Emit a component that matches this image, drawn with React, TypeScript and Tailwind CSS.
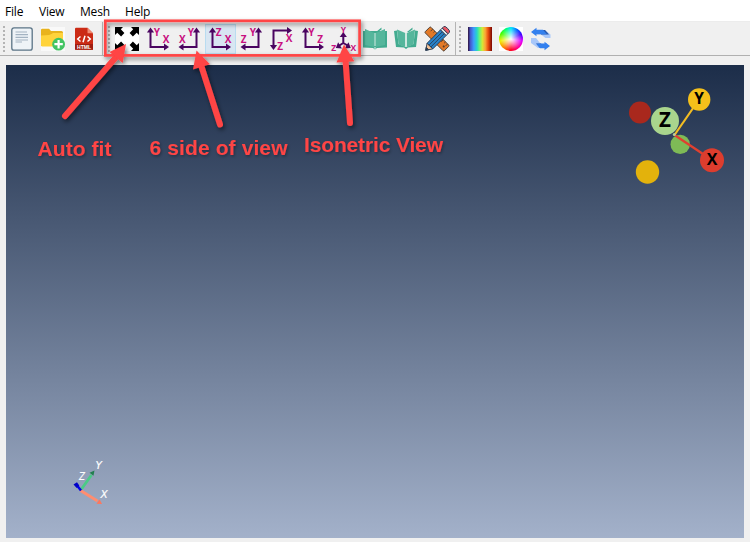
import React from "react";

const PURPLE = "#4a0560";
const PINK = "#c8107f";
const RED = "#ff4444";

function Btn({ children, active = false }: { children: React.ReactNode; active?: boolean }) {
  return (
    <button
      className={
        "flex h-[30px] w-[31px] shrink-0 items-center justify-center border " +
        (active ? "border-[#b9dcf0] bg-[#d8e6f2]" : "border-transparent")
      }
    >
      <svg width="24" height="24" viewBox="0 0 24 24" className="shrink-0 overflow-visible">
        {children}
      </svg>
    </button>
  );
}

function Grip() {
  return (
    <div className="mr-[1.5px] ml-[2px] flex h-[30px] w-[3px] shrink-0 flex-col items-center justify-center gap-[2px]">
      {[0, 1, 2, 3, 4, 5, 6].map((i) => (
        <div key={i} className="h-[2px] w-[2px] bg-[#b4b4b4]" />
      ))}
    </div>
  );
}

function Divider() {
  return <div className="-mt-[2px] h-[33px] w-px shrink-0 bg-[#b4b4b4]" />;
}

function Head({ x, y, dir }: { x: number; y: number; dir: number }) {
  return <path d="M0 0 L-5 -3.6 L-5 3.6 Z" fill={PURPLE} transform={`translate(${x} ${y}) rotate(${dir})`} />;
}

type Letter = [string, number, number];

function Letters({ items, size = 10 }: { items: Letter[]; size?: number }) {
  return (
    <g fill={PINK} fontFamily="'Open Sans', sans-serif" fontWeight="700" fontSize={size}>
      {items.map(([t, x, y]) => (
        <text key={t} x={x} y={y}>
          {t}
        </text>
      ))}
    </g>
  );
}

function Axes({ kind, items }: { kind: "right" | "left" | "down"; items: Letter[] }) {
  const s = { fill: "none", stroke: PURPLE, strokeWidth: 2 };
  return (
    <>
      {kind === "right" && (
        <>
          <path d="M4.5 4V20H19" {...s} />
          <Head x={4.5} y={0.5} dir={-90} />
          <Head x={23} y={20} dir={0} />
        </>
      )}
      {kind === "left" && (
        <>
          <path d="M19.5 4V20H5" {...s} />
          <Head x={19.5} y={0.5} dir={-90} />
          <Head x={1.5} y={20} dir={180} />
        </>
      )}
      {kind === "down" && (
        <>
          <path d="M3.5 19V3.5H18" {...s} />
          <Head x={3.5} y={23} dir={90} />
          <Head x={22} y={3.5} dir={0} />
        </>
      )}
      <Letters items={items} />
    </>
  );
}

function Book({ open = false }: { open?: boolean }) {
  return open ? (
    <>
      <path d="M0 4L3 3.5 4.5 17 12 20 19.5 17 21 3.5 24 4 22 20 14 20.5 12 22 10 20.5 2 20Z" fill="#42ab90" />
      <path d="M3 2.5L11.3 6V20L4.5 17.5Z" fill="#55b69c" />
      <path d="M21 2.5L12.7 6V20L19.5 17.5Z" fill="#55b69c" />
      <path d="M13 5L18.5 .5V2.5L15 5Z" fill="#42ab90" />
      <path d="M12 6V20" stroke="#dff1eb" strokeWidth="1" />
    </>
  ) : (
    <>
      <path d="M0 4H24V20.5L14 21 12 22.5 10 21 0 20.5Z" fill="#42ab90" />
      <path d="M2 2L11.3 6V20L2 18Z" fill="#55b69c" />
      <path d="M22 2L12.7 6V20L22 18Z" fill="#55b69c" />
      <path d="M13 5L18.5 .5V2.5L15 5Z" fill="#42ab90" />
      <path d="M12 6V19M12 20V22" stroke="#dff1eb" strokeWidth="1" />
    </>
  );
}

function Tools() {
  return (
    <>
      <g transform="rotate(45 12 12)">
        <rect x="-1.5" y="8" width="27" height="8" rx="1" fill="#e27927" stroke="#4b4038" strokeWidth=".9" />
        <path d="M2 8v3M5 8v2M8 8v3M17 8v3M20 8v2M23 8v3" stroke="#58402d" strokeWidth=".9" />
        <circle cx="22" cy="12.5" r="1" fill="#5a3b26" />
      </g>
      <g transform="rotate(-45 12 12)" stroke="#293d55" strokeWidth=".9">
        <path d="M-4 12L2 8V16Z" fill="#f2c196" />
        <path d="M-4 12L-1.5 10.3V13.7Z" fill="#263849" />
        <path d="M2 8H21V16H2Z" fill="#2983ca" />
        <path d="M2 10.7H21M2 13.3H21" />
        <path d="M21 8H23.5V16H21Z" fill="#dde5e8" />
        <path d="M23.5 8H25.5Q27 8 27 12T25.5 16H23.5Z" fill="#ed5864" />
      </g>
    </>
  );
}

function Toolbar() {
  return (
    <div className="flex h-[34px] items-start border-b border-[#b0b0b0] bg-[#f0f0f0] pt-[2px]">
      <Grip />
      <div className="flex w-[95px] shrink-0">
        <Btn>
          <rect x="1.8" y=".8" width="20.4" height="22.4" rx="2.2" fill="#eef3f7" stroke="#5b7486" strokeWidth="1.3" />
          <path d="M5.5 5H17M5.5 7.7H18M5.5 10.3H18M5.5 13H18M5.5 15H12" stroke="#a3b3c2" strokeWidth="1.2" />
        </Btn>
        <Btn>
          <rect width="24" height="24" fill="#f9f9f9" />
          <path d="M0 3Q0 1.8 1.2 1.8H8L10 4H20.5Q22 4 22 5.5V19H0Z" fill="#e9b31d" />
          <path d="M0 8.5Q10 8.5 12 6H22V19.5H1.5Q0 19.5 0 18Z" fill="#ffd33b" />
          <circle cx="17.6" cy="17.2" r="6.4" fill="#43c463" />
          <path d="M17.6 13V21.4M13.4 17.2H21.8" stroke="#fff" strokeWidth="2.2" />
        </Btn>
        <Btn>
          <path d="M4 .8H15.5L21 6.3V22.7H4Q3 22.7 3 21.7V1.8Q3 .8 4 .8Z" fill="#cb2b15" />
          <path d="M15.5 .8V6.3H21Z" fill="#f08a72" />
          <path d="M3 17H21V22.7H3Z" fill="#a11d10" />
          <path d="M8.5 9.5L5.7 12 8.5 14.5M15.5 9.5L18.3 12 15.5 14.5M13 8.8L11 15.2" fill="none" stroke="#fff" strokeWidth="1.5" />
          <text x="12" y="22" textAnchor="middle" textLength="14" lengthAdjust="spacingAndGlyphs" fill="#fff" fontFamily="'Liberation Sans', sans-serif" fontWeight="700" fontSize="5.3">
            HTML
          </text>
        </Btn>
      </div>
      <Divider />
      <div className="w-[2.5px] shrink-0" />
      <Grip />
      <div className="flex w-[342px] shrink-0">
        <Btn>
          <rect width="24" height="24" fill="#fff" />
          {[0, 90, 180, 270].map((r) => (
            <g key={r} transform={`rotate(${r} 12 12)`}>
              <path d="M0 0H8L5.8 2.3 9.4 6.1 6.1 9.4 2.3 5.8 0 8Z" fill="#000" />
            </g>
          ))}
        </Btn>
        <Btn><Axes kind="right" items={[["Y", 7.7, 8.5], ["X", 16.8, 16]]} /></Btn>
        <Btn><Axes kind="left" items={[["Y", 10.8, 8.5], ["X", 2, 16]]} /></Btn>
        <Btn active><Axes kind="right" items={[["Z", 7.7, 8.5], ["X", 16.8, 16]]} /></Btn>
        <Btn><Axes kind="left" items={[["Y", 10.8, 8.5], ["Z", 1.8, 16]]} /></Btn>
        <Btn><Axes kind="down" items={[["X", 15.8, 15], ["Z", 7.2, 22.5]]} /></Btn>
        <Btn><Axes kind="right" items={[["Y", 7.2, 8.5], ["Z", 16.3, 16]]} /></Btn>
        <Btn>
          <path d="M11.3 8V16L6.5 19M11.3 16L16.5 19" fill="none" stroke={PURPLE} strokeWidth="2" />
          <Head x={11.3} y={5} dir={-90} />
          <Head x={3.8} y={21} dir={148} />
          <Head x={18.8} y={21} dir={32} />
          <Letters size={8.5} items={[["Y", 8.8, 5.8], ["Z", -0.8, 24], ["X", 18.4, 24]]} />
        </Btn>
        <Btn><Book /></Btn>
        <Btn><Book open /></Btn>
        <Btn><Tools /></Btn>
      </div>
      <div className="w-px shrink-0" />
      <Divider />
      <div className="w-px shrink-0" />
      <Grip />
      <div className="ml-[1.5px] flex shrink-0">
        <Btn>
          <defs>
            <linearGradient id="spectrum">
              <stop offset="0" stopColor="#30123b" />
              <stop offset=".1" stopColor="#4458cb" />
              <stop offset=".24" stopColor="#3e9bfe" />
              <stop offset=".37" stopColor="#25d6c9" />
              <stop offset=".48" stopColor="#6bf576" />
              <stop offset=".6" stopColor="#d5e835" />
              <stop offset=".72" stopColor="#fca636" />
              <stop offset=".84" stopColor="#ea4f0d" />
              <stop offset="1" stopColor="#7a0403" />
            </linearGradient>
          </defs>
          <rect width="24" height="24" fill="url(#spectrum)" />
        </Btn>
        <div className="flex h-[30px] w-[31px] items-center justify-center">
          <div className="h-6 w-6 bg-white">
            <div className="h-6 w-6 rounded-full bg-[radial-gradient(circle,white_0%,transparent_65%),conic-gradient(#00e5ff_0deg,#0060ff_35deg,#4000ff_65deg,#e000ff_100deg,#ff0090_140deg,#ff0020_180deg,#ff8000_220deg,#f0f000_260deg,#40ff00_300deg,#00ff80_335deg,#00e5ff_360deg)]" />
          </div>
        </div>
        <Btn>
          <g transform="translate(1 0)">
            <path d="M6 3H14L19.5 7.5V11H14.5L10 7.5H6Z" fill="#a7c7fa" />
            <path d="M10 3H14L18 7.5H10Z" fill="#2858ab" />
            <path d="M0 5L5.5 .7V2.8H12L16 7.3H5.5V9.3Z" fill="#3380ee" />
            <path d="M16 21H7L0 16V11H5L9 16H16Z" fill="#a7c7fa" />
            <path d="M5 16.5H10L12 21H9Z" fill="#2858ab" />
            <path d="M19 19L13.5 14.7V16.8H5.5L9 21.2H13.5V23.3Z" fill="#3380ee" />
          </g>
        </Btn>
      </div>
    </div>
  );
}

function Sphere({ x, y, r, fill, label = "", size = 15 }: { x: number; y: number; r: number; fill: string; label?: string; size?: number }) {
  return (
    <>
      <circle cx={x} cy={y} r={r} fill={fill} />
      {label && (
        <text x={x} y={y + size * 0.27} textAnchor="middle" fontFamily="'Open Sans', sans-serif" fontWeight="700" fontSize={size} fill="#000">
          {label}
        </text>
      )}
    </>
  );
}

function Gizmo() {
  return (
    <svg width="110" height="110" viewBox="620 80 110 110" className="mt-[15px] mr-[14px]">
      <Sphere x={640} y={112.5} r={11} fill="#a9281d" />
      <Sphere x={647.5} y={172} r={11.7} fill="#e3b20c" />
      <Sphere x={680.2} y={144.4} r={9.7} fill="#7eba56" />
      <path d="M674.5 135L699 99.5" stroke="#f3bd22" strokeWidth="2.2" />
      <path d="M674.5 135L712 160" stroke="#e0402f" strokeWidth="2.2" />
      <Sphere x={665} y={121} r={14} fill="#a9d58d" label="Z" size={20.5} />
      <Sphere x={699.2} y={99.5} r={11.2} fill="#f5c01a" label="Y" size={15.5} />
      <Sphere x={712} y={160.2} r={12} fill="#dd3d2e" label="X" size={16} />
      <circle cx="674.3" cy="134.5" r="1.5" fill="#b9cf98" />
    </svg>
  );
}

function Triad() {
  return (
    <svg width="50" height="56" viewBox="65 455 50 56" className="mb-[27px] ml-[59px]">
      <path d="M80.5 490.5L91.5 475" stroke="#4acb87" strokeWidth="2.8" />
      <path d="M94.5 470.5L89.5 472.8 93.5 475.8Z" fill="#237f50" />
      <path d="M80.5 490.5L97.5 501" stroke="#ff8d70" strokeWidth="3" />
      <path d="M102 504L96.5 503.7 99.5 499.2Z" fill="#ff765c" />
      <path d="M81 490.5L77 485.5" stroke="#0000e4" strokeWidth="2.5" />
      <path d="M73.5 484.5L77 482.3 79.3 485.5 76.7 488Z" fill="#0000c8" />
      <g fill="#fff" stroke="#fff" strokeWidth=".15" fontFamily="'DejaVu Sans', sans-serif" fontStyle="italic" fontSize="10.5">
        <text x="95.5" y="468.5">Y</text>
        <text x="79" y="480" textLength="6" lengthAdjust="spacingAndGlyphs">Z</text>
        <text x="100.5" y="498">X</text>
      </g>
    </svg>
  );
}

function Arrow({ from, to, a, b, tip }: { from: [number, number]; to: [number, number]; a: string; b: string; tip: string }) {
  return (
    <>
      <path d={`M${from.join(" ")}L${to.join(" ")}`} stroke={RED} strokeWidth="6" strokeLinecap="round" />
      <path d={`M${tip}L${a}L${b}Z`} fill={RED} />
    </>
  );
}

function Annotations() {
  return (
    <svg className="pointer-events-none absolute inset-0" width="750" height="542" viewBox="0 0 750 542">
      <defs>
        <filter id="drop" x="-20%" y="-20%" width="150%" height="150%">
          <feDropShadow dx="1.5" dy="2.5" stdDeviation="2" floodColor="#000" floodOpacity=".5" />
        </filter>
        <filter id="soft" x="-20%" y="-20%" width="150%" height="150%">
          <feDropShadow dx="1" dy="1.5" stdDeviation="1.5" floodColor="#000" floodOpacity=".35" />
        </filter>
      </defs>
      <g filter="url(#drop)">
        <rect x="105.3" y="20.8" width="254.3" height="34.6" fill="none" stroke={RED} strokeWidth="2.7" />
        <Arrow from={[65, 116]} to={[117, 56]} tip="126 44" a="109.5 52" b="122.7 63" />
        <Arrow from={[220, 124.5]} to={[201, 65]} tip="196.5 50.5" a="193 69.5" b="210 64.3" />
        <Arrow from={[350, 123]} to={[345.5, 60]} tip="344 44.5" a="336.5 62.5" b="354.3 61.3" />
      </g>
      <g filter="url(#soft)" fill={RED} fontFamily="'Liberation Sans', Arial, sans-serif" fontWeight="700" fontSize="21">
        <text x="37.5" y="156" textLength="74">Auto fit</text>
        <text x="149.5" y="155" textLength="138">6 side of view</text>
        <text x="304" y="152" textLength="139">Isonetric View</text>
      </g>
    </svg>
  );
}

export default function App() {
  return (
    <div className="relative flex h-[542px] w-[750px] flex-col overflow-hidden bg-[#f0f0f0]">
      <nav className="flex h-[22px] items-center border-b border-[#ececec] bg-white pt-[2px] pl-[5px] font-['Open_Sans',sans-serif] text-[12px] leading-none tracking-[-0.2px] text-black">
        <span className="w-[34px]">File</span>
        <span className="w-[41px]">View</span>
        <span className="w-[45px]">Mesh</span>
        <span>Help</span>
      </nav>
      <Toolbar />
      <main className="mx-[6px] mt-[9px] mb-[4px] flex flex-1 flex-col justify-between bg-linear-to-b/srgb from-[#1c2d49] to-[#a3b1ca]">
        <div className="flex justify-end">
          <Gizmo />
        </div>
        <Triad />
      </main>
      <Annotations />
    </div>
  );
}
